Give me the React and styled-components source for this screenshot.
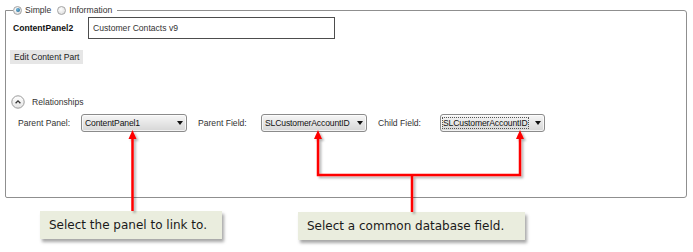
import React from 'react';
import styled, { createGlobalStyle, css } from 'styled-components';

const Global = createGlobalStyle`
  html, body { margin: 0; padding: 0; background: #fff; }
  body { font-family: "Liberation Sans", Arial, sans-serif; }
`;

const Page = styled.div`
  position: relative;
  width: 693px;
  height: 252px;
  overflow: hidden;
  box-sizing: border-box;
  padding-top: 3px;
  background: #fff;
  font-family: "Liberation Sans", Arial, sans-serif;
  font-size: 8.6px;
  color: #2c2c2c;
`;

const Frame = styled.fieldset`
  margin: 0 0 0 5px;
  width: 682px;
  height: 195px;
  box-sizing: border-box;
  border: 1px solid #8f8f8f;
  border-radius: 0 3px 3px 2px;
  padding: 0 0 0 7px;
  min-width: 0;
`;

const Legend = styled.legend`
  display: flex;
  align-items: center;
  height: 14px;
  padding: 0 5px 0 0;
`;

const RadioOption = styled.label`
  display: inline-flex;
  align-items: center;
  gap: 3px;
  margin-right: ${p => (p.$last ? '0' : '6px')};
  color: #333;
`;

const RadioDot = styled.span`
  position: relative;
  width: 7px;
  height: 7px;
  border-radius: 50%;
  border: 1px solid #a4a4a4;
  background: radial-gradient(circle at 40% 35%, #ffffff, #d6d6d6);
  ${p =>
    p.$checked &&
    css`
      &::after {
        content: '';
        position: absolute;
        inset: 1.5px;
        border-radius: 50%;
        background: radial-gradient(circle at 40% 35%, #6fb6de, #1d5f86);
      }
    `}
`;

const NameRow = styled.div`
  display: flex;
  align-items: center;
  height: 22px;
`;

const NameLabel = styled.span`
  width: 75px;
  font-weight: bold;
  color: #111;
`;

const NameInput = styled.input`
  width: 247px;
  height: 22px;
  box-sizing: border-box;
  border: 1px solid #4d4d4d;
  padding: 0 0 0 4px;
  margin: 0;
  font: inherit;
  color: #333;
  background: #fff;
  outline: none;
`;

const EditButton = styled.button`
  display: block;
  margin: 11px 0 0 -3px;
  height: 14px;
  padding: 0 4px;
  border: none;
  background: #e6e6e6;
  font: inherit;
  color: #222;
  line-height: 14px;
`;

const SectionHeader = styled.div`
  display: flex;
  align-items: center;
  gap: 7px;
  margin: 31px 0 0 -2px;
  color: #333;
`;

const ExpandIcon = styled.svg`
  width: 14px;
  height: 14px;
  flex: none;
`;

const ComboRow = styled.div`
  display: flex;
  align-items: center;
  margin: 5px 0 0 5px;
`;

const FieldLabel = styled.span`
  width: ${p => p.$w}px;
  flex: none;
  color: #333;
`;

const Combo = styled.div`
  position: relative;
  display: flex;
  align-items: center;
  flex: none;
  width: ${p => p.$w}px;
  height: 18px;
  box-sizing: border-box;
  margin-right: 11px;
  padding: 0 0 0 3px;
  border: 1px solid #8b8b8b;
  border-radius: 3px;
  background: linear-gradient(#f6f6f6, #e6e6e6 50%, #d6d6d6);
  box-shadow: inset 0 0 0 1px rgba(255, 255, 255, 0.7);
  color: #111;
`;

const ComboText = styled.span`
  flex: 1 1 auto;
  min-width: 0;
  white-space: nowrap;
  letter-spacing: -0.15px;
  padding: 1px 0;
  ${p =>
    p.$focused &&
    css`
      flex: 0 0 auto;
      margin: 0 3px 0 -2px;
      padding: 1px 1px;
      outline: 1px dotted #555;
      outline-offset: -1px;
    `}
`;

const Caret = styled.span`
  flex: none;
  width: 0;
  height: 0;
  margin: 0 3px 0 auto;
  border-left: 3px solid transparent;
  border-right: 3px solid transparent;
  border-top: 4px solid #111;
`;

const CalloutRow = styled.div`
  display: flex;
  align-items: flex-start;
  margin-top: 13px;
`;

const Callout = styled.div`
  width: ${p => p.$w}px;
  height: 28px;
  margin-left: ${p => p.$ml}px;
  margin-top: ${p => p.$mt || 0}px;
  box-sizing: border-box;
  padding-left: 9px;
  display: flex;
  align-items: center;
  background: #eaedde;
  box-shadow: 2px 3px 3px rgba(0, 0, 0, 0.35);
  font-family: "DejaVu Sans", Verdana, sans-serif;
  font-size: 12px;
  color: #1a1a1a;
`;

const Annotations = styled.svg`
  position: absolute;
  left: 0;
  top: 0;
  width: 693px;
  height: 252px;
  pointer-events: none;
`;

function Dropdown({ w, value, focused }) {
  return (
    <Combo $w={w}>
      <ComboText $focused={focused}>{value}</ComboText>
      <Caret />
    </Combo>
  );
}

export default function App() {
  return (
    <>
      <Global />
      <Page>
        <Frame>
          <Legend>
            <RadioOption>
              <RadioDot $checked />
              Simple
            </RadioOption>
            <RadioOption $last>
              <RadioDot />
              Information
            </RadioOption>
          </Legend>
          <NameRow>
            <NameLabel>ContentPanel2</NameLabel>
            <NameInput readOnly value="Customer Contacts v9" />
          </NameRow>
          <EditButton>Edit Content Part</EditButton>
          <SectionHeader>
            <ExpandIcon viewBox="0 0 14 14">
              <defs>
                <linearGradient id="eg" x1="0" y1="0" x2="0" y2="1">
                  <stop offset="0" stopColor="#ffffff" />
                  <stop offset="1" stopColor="#e4e4e4" />
                </linearGradient>
              </defs>
              <circle cx="7" cy="7" r="6.2" fill="url(#eg)" stroke="#9a9a9a" strokeWidth="1" />
              <path d="M4.6 8.2 L7 5.8 L9.4 8.2" fill="none" stroke="#333" strokeWidth="1.3" />
            </ExpandIcon>
            Relationships
          </SectionHeader>
          <ComboRow>
            <FieldLabel $w={63}>Parent Panel:</FieldLabel>
            <Dropdown w={106} value="ContentPanel1" />
            <FieldLabel $w={63}>Parent Field:</FieldLabel>
            <Dropdown w={106} value="SLCustomerAccountID" />
            <FieldLabel $w={62}>Child Field:</FieldLabel>
            <Dropdown w={105} value="SLCustomerAccountID" focused />
          </ComboRow>
        </Frame>
        <CalloutRow>
          <Callout $w={182} $ml={40}>Select the panel to link to.</Callout>
          <Callout $w={227} $ml={76} $mt={1}>Select a common database field.</Callout>
        </CalloutRow>
        <Annotations viewBox="0 0 693 252">
          <defs>
            <filter id="sh" x="-20%" y="-20%" width="140%" height="140%">
              <feDropShadow dx="2" dy="2" stdDeviation="1" floodColor="#000" floodOpacity="0.3" />
            </filter>
          </defs>
          <g filter="url(#sh)" fill="#ff0000" stroke="none">
            <path d="M132.5 138 V211" stroke="#ff0000" strokeWidth="2.5" fill="none" />
            <polygon points="132.5,130 128.5,139 136.5,139" />
            <path d="M318 138 V175 H520 V138" stroke="#ff0000" strokeWidth="2.5" fill="none" />
            <polygon points="318,130 314,139 322,139" />
            <polygon points="520,130 516,139 524,139" />
            <path d="M412 175 V212" stroke="#ff0000" strokeWidth="2.5" fill="none" />
          </g>
        </Annotations>
      </Page>
    </>
  );
}
